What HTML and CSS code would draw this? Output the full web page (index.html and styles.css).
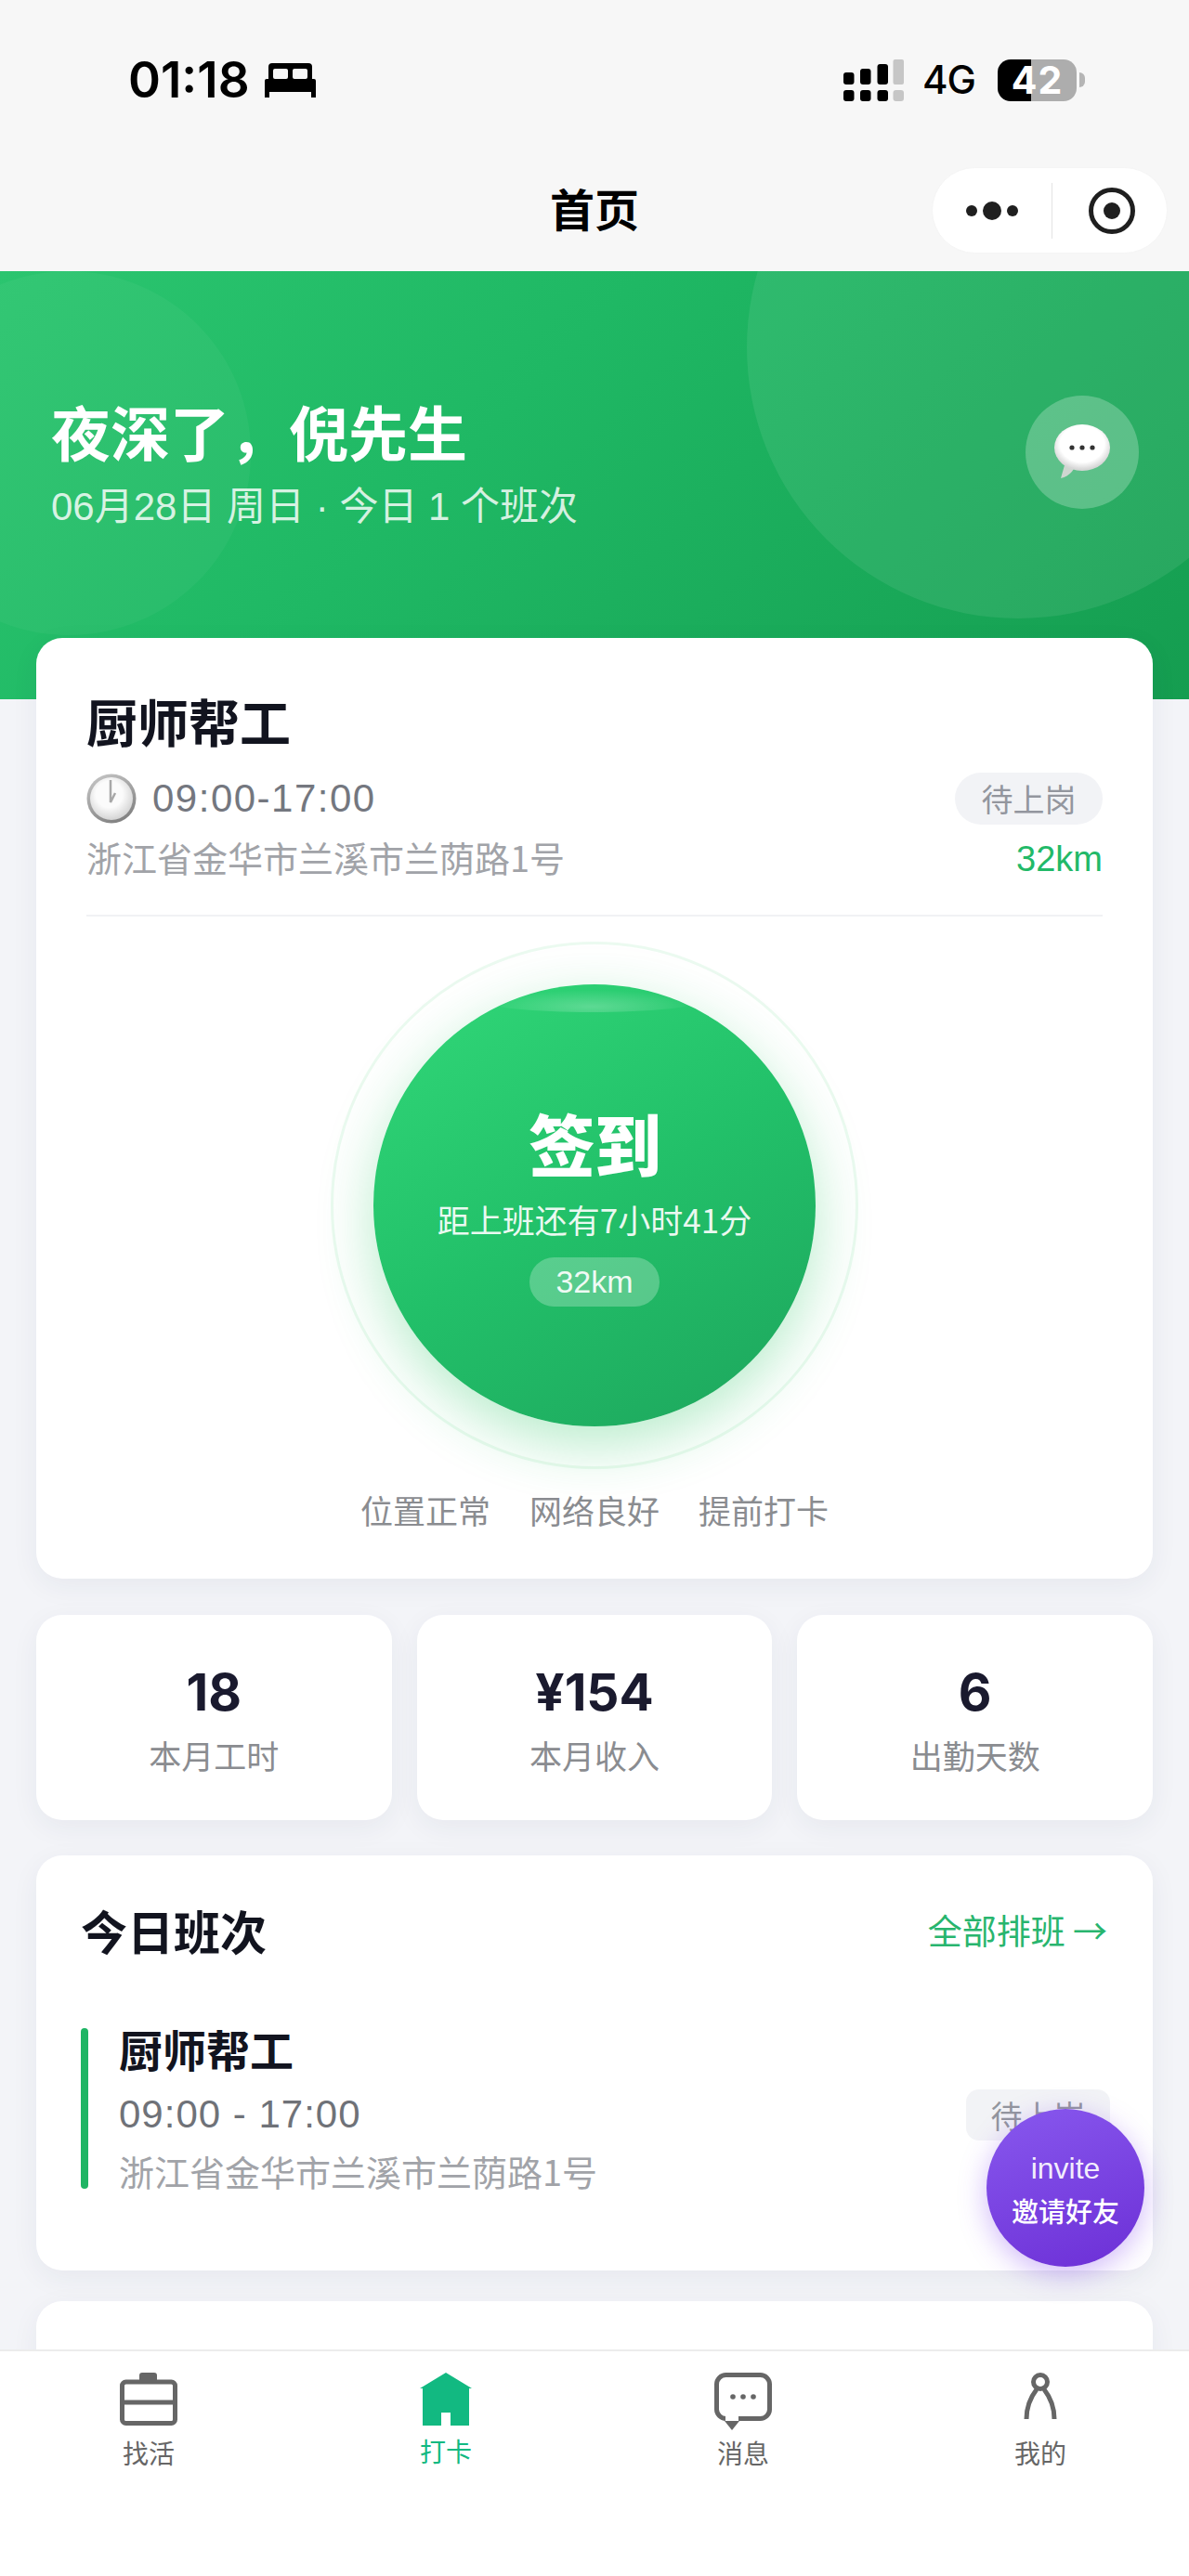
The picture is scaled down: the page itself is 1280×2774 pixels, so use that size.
FILE: index.html
```html
<!DOCTYPE html>
<html lang="zh-CN">
<head>
<meta charset="utf-8">
<title>首页</title>
<link rel="stylesheet" href="styles.css">
</head>
<body>
<div class="app">
  <header class="top">
    <div class="status">
      <div class="status-left">
        <span class="clock">01:18</span>
        <svg class="bed" viewBox="0 0 55 37"><path d="M8 0h39a4 4 0 0 1 4 4v15H4V4a4 4 0 0 1 4-4z" fill="#000"/><rect x="9" y="6" width="16" height="11" rx="2" fill="#f7f7f7"/><rect x="30" y="6" width="16" height="11" rx="2" fill="#f7f7f7"/><rect x="0" y="17" width="55" height="14" rx="2" fill="#000"/><rect x="0" y="29" width="5" height="8" fill="#000"/><rect x="50" y="29" width="5" height="8" fill="#000"/></svg>
      </div>
      <div class="status-right">
        <svg class="signal" viewBox="0 0 65 45">
          <rect x="0" y="14" width="11.5" height="13" rx="3"/><rect x="18" y="10" width="11.5" height="17" rx="3"/><rect x="36.500" y="5" width="11.500" height="22" rx="3"/>
          <rect x="0" y="33" width="11.500" height="12" rx="3"/><rect x="18" y="33" width="11.500" height="12" rx="3"/><rect x="36.500" y="33" width="11.500" height="12" rx="3"/>
          <rect class="signal-off" x="53.500" y="0" width="11.500" height="27" rx="2"/><rect class="signal-off" x="53.500" y="33" width="11.500" height="12" rx="3"/>
        </svg>
        <span class="net">4G</span>
        <div class="battery"><span class="battery-num">42</span></div>
        <span class="battery-nub"></span>
      </div>
    </div>
    <div class="nav">
      <span></span>
      <h1 class="nav-title">首页</h1>
      <div class="capsule">
        <svg class="capsule-more" viewBox="0 0 56 20"><circle cx="6" cy="10" r="6"/><circle cx="28" cy="10" r="10"/><circle cx="50" cy="10" r="6"/></svg>
        <span class="capsule-line"></span>
        <svg class="capsule-target" viewBox="0 0 50 50"><circle cx="25" cy="25" r="22.500" fill="none" stroke="#1f1f1f" stroke-width="5"/><circle cx="25" cy="25" r="9" fill="#1f1f1f"/></svg>
      </div>
    </div>
  </header>

  <section class="hero">
    <span class="hero-orb hero-orb-right"></span>
    <span class="hero-orb hero-orb-left"></span>
    <div class="hero-text">
      <div class="greeting">夜深了，倪先生</div>
      <div class="hero-sub">06月28日 周日 · 今日 1 个班次</div>
    </div>
    <div class="hero-bubble">
      <svg viewBox="0 0 64 64" width="64" height="64">
        <defs><radialGradient id="bub" cx="50%" cy="42%" r="55%"><stop offset="0.72" stop-color="#ffffff"/><stop offset="1" stop-color="#d6d6d6"/></radialGradient></defs>
        <path d="M13 46 L9 60 Q18 58 23 50 Z" fill="#cfd6d0"/>
        <ellipse cx="32" cy="27" rx="30" ry="25" fill="url(#bub)"/>
        <circle cx="21" cy="27" r="2.600" fill="#333"/><circle cx="32" cy="27" r="2.600" fill="#333"/><circle cx="43" cy="27" r="2.600" fill="#333"/>
      </svg>
    </div>
  </section>

  <main class="content">
    <section class="card main-card">
      <h2 class="job-title">厨师帮工</h2>
      <div class="job-row">
        <div class="job-left">
          <div class="job-time">
            <svg class="clock-emoji" viewBox="0 0 54 54">
              <defs>
                <linearGradient id="rim" x1="0.2" y1="0" x2="0.7" y2="1"><stop offset="0" stop-color="#c4c4c4"/><stop offset="0.6" stop-color="#9b9b9b"/><stop offset="1" stop-color="#7f7f7f"/></linearGradient>
                <radialGradient id="face" cx="45%" cy="40%" r="62%"><stop offset="0.5" stop-color="#fbfbfb"/><stop offset="1" stop-color="#d2d2d2"/></radialGradient>
              </defs>
              <circle cx="27" cy="27" r="26.500" fill="url(#rim)"/><circle cx="27" cy="27" r="23" fill="url(#face)"/>
              <path d="M26 7V31L31 21" fill="none" stroke="#a8a8a8" stroke-width="2.500"/>
            </svg>
            <span>09:00-17:00</span>
          </div>
          <div class="job-addr">浙江省金华市兰溪市兰荫路1号</div>
        </div>
        <div class="job-right">
          <span class="tag tag-pill">待上岗</span>
          <span class="dist">32km</span>
        </div>
      </div>
      <div class="divider"></div>
      <div class="ring">
        <div class="sign">
          <span class="sign-shine"></span>
          <div class="sign-title">签到</div>
          <div class="sign-sub">距上班还有7小时41分</div>
          <div class="sign-dist">32km</div>
        </div>
      </div>
      <div class="checks"><span>位置正常</span><span>网络良好</span><span>提前打卡</span></div>
    </section>

    <section class="stats">
      <div class="stat"><div class="stat-num">18</div><div class="stat-label">本月工时</div></div>
      <div class="stat"><div class="stat-num">¥154</div><div class="stat-label">本月收入</div></div>
      <div class="stat"><div class="stat-num">6</div><div class="stat-label">出勤天数</div></div>
    </section>

    <section class="card sched">
      <div class="sched-head">
        <h2 class="sched-title">今日班次</h2>
        <span class="sched-link">全部排班 →</span>
      </div>
      <div class="shift">
        <span class="shift-bar"></span>
        <div class="shift-body">
          <div class="shift-title">厨师帮工</div>
          <div class="shift-time">09:00 - 17:00</div>
          <div class="shift-addr">浙江省金华市兰溪市兰荫路1号</div>
        </div>
        <span class="tag tag-square">待上岗</span>
      </div>
    </section>

    <section class="card next-card"></section>
  </main>

  <div class="invite"><span class="invite-en">invite</span><span class="invite-cn">邀请好友</span></div>

  <nav class="tabs">
    <div class="tab">
      <div class="tab-icon">
        <svg width="62" height="57" viewBox="0 0 62 57"><rect x="21" y="0" width="19" height="11" rx="3" fill="#666"/><rect x="2.500" y="10" width="57" height="44.500" rx="4" fill="#fff" stroke="#666" stroke-width="5"/><path d="M2 32H60" stroke="#666" stroke-width="5"/></svg>
      </div>
      <span class="tab-label">找活</span>
    </div>
    <div class="tab tab-active">
      <div class="tab-icon">
        <svg width="56" height="57" viewBox="0 0 56 57"><path d="M28 0L56 17H53V57H33V43H23V57H3V17H0Z" fill="#12b981"/></svg>
      </div>
      <span class="tab-label">打卡</span>
    </div>
    <div class="tab">
      <div class="tab-icon">
        <svg width="62" height="62" viewBox="0 0 62 62"><rect x="2.500" y="2.500" width="57" height="47" rx="10" fill="#fff" stroke="#666" stroke-width="5"/><circle cx="20" cy="26" r="2.800" fill="#666"/><circle cx="31" cy="26" r="2.800" fill="#666"/><circle cx="42" cy="26" r="2.800" fill="#666"/><rect x="12" y="46" width="14" height="7" fill="#fff"/><path d="M11 52H27L19 62Z" fill="#666"/></svg>
      </div>
      <span class="tab-label">消息</span>
    </div>
    <div class="tab">
      <div class="tab-icon">
        <svg width="36" height="50" viewBox="0 0 36 50"><circle cx="18" cy="10" r="7.500" fill="none" stroke="#666" stroke-width="5"/><path d="M14 18C7 27 3 37 3 50M22 18C29 27 33 37 33 50" fill="none" stroke="#666" stroke-width="5"/></svg>
      </div>
      <span class="tab-label">我的</span>
    </div>
  </nav>
</div>
</body>
</html>
```
FILE: styles.css
```css
* { box-sizing: border-box; }
html, body { margin: 0; padding: 0; }
body {
  background: #f3f4f8;
  font-family: "Inter", "Noto Sans CJK SC", sans-serif;
  color: #12141f;
}
.app { position: relative; width: 1280px; height: 2774px; overflow: hidden; background: #f3f4f8; }

/* top */
.top { height: 292px; background: #f7f7f7; }
.status { height: 172px; display: flex; justify-content: space-between; align-items: center; padding: 0 112px 0 138px; }
.status-left { display: flex; align-items: center; gap: 16px; }
.clock { font-size: 53px; font-weight: 600; line-height: 60px; color: #000; }
.bed { width: 55px; height: 37px; }
.status-right { display: flex; align-items: center; }
.signal { width: 65px; height: 45px; fill: #000; }
.signal-off { fill: #c6c6c6; }
.net { font-size: 42px; font-weight: 500; line-height: 50px; color: #000; margin: 0 24px 0 20px; letter-spacing: -1px; }
.battery {
  width: 85px; height: 45px; border-radius: 14px; display: flex; align-items: center; justify-content: center;
  background: linear-gradient(90deg, #000 0, #000 42%, #adadad 42%, #adadad 100%);
}
.battery-num { color: #fff; font-size: 41px; font-weight: 700; line-height: 45px; letter-spacing: 1px; }
.battery-nub { width: 6px; height: 16px; margin-left: 3px; background: #b5b5b5; border-radius: 0 6px 6px 0; }
.nav { height: 120px; padding: 0 23px 18px; display: grid; grid-template-columns: 1fr auto 1fr; align-items: center; }
.nav-title { margin: 0; font: 700 48px/60px "Noto Sans CJK SC", sans-serif; color: #000; }
.capsule {
  justify-self: end; width: 254px; height: 93px; margin-bottom: -7px; border-radius: 47px; background: #fff;
  display: flex; align-items: center; border: 1px solid #f5f5f5;
}
.capsule-more { width: 56px; height: 20px; margin-left: 36px; fill: #1f1f1f; }
.capsule-line { width: 1px; height: 60px; margin-left: 36px; background: #e4e4e4; }
.capsule-target { width: 50px; height: 50px; margin-left: 39px; }

/* hero */
.hero {
  position: relative; height: 461px; overflow: hidden; padding: 133px 54px 0 55px;
  display: flex; justify-content: space-between; align-items: flex-start;
  background: linear-gradient(135deg, #2bc56f 0%, #1fb864 40%, #159d50 100%);
}
.hero-orb { position: absolute; border-radius: 50%; background: rgba(255,255,255,.08); }
.hero-orb-right { width: 584px; height: 584px; left: 804px; top: -210px; }
.hero-orb-left { width: 392px; height: 392px; left: -122px; top: 0; background: rgba(255,255,255,.04); }
.hero-text { position: relative; }
.greeting { font: 700 64px/76px "Noto Sans CJK SC", sans-serif; color: #fff; }
.hero-sub { margin-top: 19px; font-size: 42px; line-height: 52px; color: rgba(255,255,255,.82); font-family: "Liberation Sans", "Noto Sans CJK SC", sans-serif; }
.hero-bubble {
  position: relative; width: 122px; height: 122px; margin-top: 1px; border-radius: 50%;
  background: rgba(255,255,255,.24); display: flex; align-items: center; justify-content: center;
}

/* cards */
.content { position: relative; margin-top: -66px; padding: 0 39px; }
.card { background: #fff; border-radius: 28px; box-shadow: 0 8px 30px rgba(35,45,90,.06); }
.main-card { height: 1013px; padding: 60px 54px 47px; }
.job-title { margin: 0; font: 700 55px/56px "Noto Sans CJK SC", sans-serif; color: #12141f; }
.job-row { display: flex; justify-content: space-between; margin-top: 29px; }
.job-time { display: flex; align-items: center; height: 56px; gap: 17px; font-size: 42px; color: #74777f; font-family: "Liberation Sans", sans-serif; letter-spacing: 1.500px; }
.clock-emoji { width: 54px; height: 54px; }
.job-addr { margin-top: 10px; font: 400 38px/50px "Noto Sans CJK SC", sans-serif; color: #a1a3a8; }
.job-right { display: flex; flex-direction: column; align-items: flex-end; }
.tag { background: #f2f3f6; color: #93969e; font: 400 34px/56px "Noto Sans CJK SC", sans-serif; display: block; text-align: center; }
.tag-pill { width: 159px; height: 56px; border-radius: 28px; }
.dist { margin-top: 15px; font: 400 38px/44px "Liberation Sans", sans-serif; color: #22b968; margin-right: 0; }
.divider { height: 2px; margin-top: 37px; background: #f1f2f4; }
.ring {
  width: 568px; height: 568px; margin: 27px auto 0; border-radius: 50%; border: 3px solid rgba(34,197,94,.09);
  display: flex; align-items: center; justify-content: center;
}
.sign {
  position: relative; overflow: visible; width: 476px; height: 476px; border-radius: 50%;
  background: linear-gradient(150deg, #2fd476 8%, #22c069 50%, #1ea85e 95%);
  box-shadow: 0 20px 60px rgba(34,197,94,.32);
  display: flex; flex-direction: column; align-items: center; padding-top: 128px; color: #fff;
}
.sign-shine {
  position: absolute; left: 120px; top: 6px; width: 230px; height: 24px; border-radius: 50%;
  background: radial-gradient(ellipse at center 75%, rgba(255,255,255,.24), rgba(255,255,255,0) 70%);
}
.sign-title { font: 900 72px/84px "Noto Sans CJK SC", sans-serif; letter-spacing: -1px; }
.sign-sub { margin-top: 17px; font: 400 35px/48px "Noto Sans CJK SC", sans-serif; color: rgba(255,255,255,.92); }
.sign-dist {
  width: 140px; height: 53px; margin-top: 17px; border-radius: 27px; background: rgba(255,255,255,.25);
  text-align: center; font: 400 34px/53px "Liberation Sans", sans-serif; color: rgba(255,255,255,.92);
}
.checks { display: flex; justify-content: center; gap: 42px; margin-top: 19px; font: 400 35px/50px "Noto Sans CJK SC", sans-serif; color: #8a8c90; }

/* stats */
.stats { display: grid; grid-template-columns: repeat(3, 1fr); gap: 27px; margin-top: 39px; }
.stat { height: 221px; padding-top: 53px; border-radius: 28px; background: #fff; text-align: center; box-shadow: 0 8px 30px rgba(35,45,90,.06); }
.stat-num { font-size: 55px; line-height: 60px; font-weight: 700; color: #1a1a2e; }
.stat-label { margin-top: 13px; font: 400 35px/50px "Noto Sans CJK SC", sans-serif; color: #8a8c90; }

/* schedule */
.sched { height: 447px; margin-top: 38px; padding: 50px 49px 0 48px; }
.sched-head { display: flex; justify-content: space-between; align-items: center; height: 60px; }
.sched-title { margin: 0; font: 700 50px/60px "Noto Sans CJK SC", sans-serif; color: #12141f; }
.sched-link { font: 400 37px/60px "Noto Sans CJK SC", sans-serif; color: #28b56e; }
.shift { display: flex; height: 173px; margin-top: 76px; }
.shift-bar { width: 8px; border-radius: 4px; background: #1fb564; }
.shift-body { flex: 1; padding-left: 33px; }
.shift-title { font: 700 47px/44px "Noto Sans CJK SC", sans-serif; color: #12141f; }
.shift-time { margin-top: 21px; font: 400 42px/56px "Liberation Sans", sans-serif; color: #6f7278; letter-spacing: 1px; }
.shift-addr { margin-top: 14px; font: 400 38px/38px "Noto Sans CJK SC", sans-serif; color: #a1a3a8; }
.tag-square { align-self: flex-start; width: 155px; height: 55px; margin-top: 66px; margin-right: -3px; border-radius: 14px; line-height: 55px; }
.next-card { height: 200px; margin-top: 33px; }

/* invite */
.invite {
  position: absolute; left: 1062px; top: 2271px; width: 170px; height: 170px; border-radius: 50%;
  background: linear-gradient(160deg, #8858ee 0%, #6c2fd6 100%);
  box-shadow: 0 8px 30px rgba(124,58,237,.35);
  display: flex; flex-direction: column; align-items: center; justify-content: center; color: #fff;
}
.invite-en { font: 400 32px/44px "Liberation Sans", sans-serif; color: rgba(255,255,255,.92); }
.invite-cn { font: 500 29px/40px "Noto Sans CJK SC", sans-serif; margin-top: 3px; }

/* tabs */
.tabs {
  position: absolute; left: 0; right: 0; bottom: 0; height: 244px; padding-top: 23px;
  display: flex; align-items: flex-start; background: #fff; border-top: 2px solid #ececec;
}
.tab { flex: 1; display: flex; flex-direction: column; align-items: center; color: #666; }
.tab-icon { height: 66px; }
.tab-icon svg { display: block; }
.tab-label { font: 400 28px/40px "Noto Sans CJK SC", sans-serif; }
.tab-active { color: #12b981; }
.tab-active .tab-icon { height: 64px; }
```
